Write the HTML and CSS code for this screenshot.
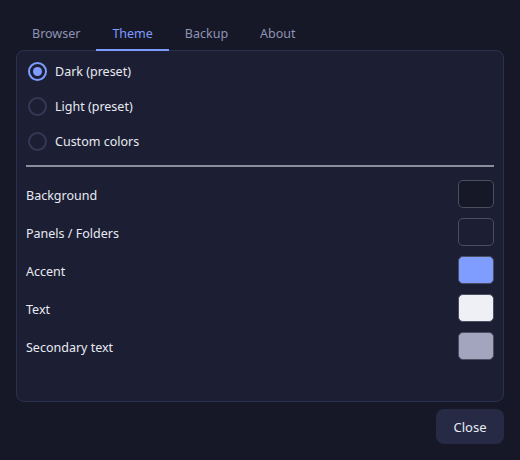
FILE: index.html
```html
<!DOCTYPE html>
<html>
<head>
<meta charset="utf-8">
<link rel="stylesheet" href="styles.css">
</head>
<body>
<div class="app">
  <nav class="tabs">
    <div class="tab">Browser</div>
    <div class="tab active">Theme</div>
    <div class="tab">Backup</div>
    <div class="tab">About</div>
  </nav>
  <section class="panel">
    <div class="radios">
      <label class="radio-row"><span class="radio checked"></span>Dark (preset)</label>
      <label class="radio-row"><span class="radio"></span>Light (preset)</label>
      <label class="radio-row"><span class="radio"></span>Custom colors</label>
    </div>
    <hr class="divider">
    <div class="colors">
      <div class="color-row"><span>Background</span><span class="swatch sw-bg"></span></div>
      <div class="color-row"><span>Panels / Folders</span><span class="swatch sw-panel"></span></div>
      <div class="color-row"><span>Accent</span><span class="swatch sw-accent"></span></div>
      <div class="color-row"><span>Text</span><span class="swatch sw-text"></span></div>
      <div class="color-row"><span>Secondary text</span><span class="swatch sw-sec"></span></div>
    </div>
  </section>
  <footer class="footer">
    <button class="close-btn">Close</button>
  </footer>
</div>
</body>
</html>
```
FILE: styles.css
```css
* { box-sizing: border-box; }
html, body {
  margin: 0;
  height: 100%;
  background: #161827;
}
body {
  font-family: "Noto Sans", "Open Sans", sans-serif;
  font-size: 12.5px;
  color: #e8eaf2;
}
.app {
  height: 460px;
  padding: 16px;
  display: flex;
  flex-direction: column;
}
.tabs {
  display: flex;
  margin-bottom: -1px;
  position: relative;
  z-index: 1;
}
.tab {
  padding: 9px 16px 7px 16px;
  line-height: 17px;
  border-bottom: 2px solid transparent;
  color: #8e94b3;
}
.tab.active {
  color: #7e9cff;
  border-bottom-color: #7e9cff;
}
.panel {
  flex: 1;
  background: #1c1f33;
  border: 1px solid #2d3150;
  border-radius: 8px;
  padding: 3px 9px 9px 9px;
}
.radios {
  display: flex;
  flex-direction: column;
}
.radio-row {
  height: 35px;
  display: flex;
  align-items: center;
  gap: 8px;
  padding-left: 2px;
}
.radio {
  width: 19px;
  height: 19px;
  border-radius: 50%;
  border: 2px solid #343855;
  display: flex;
  align-items: center;
  justify-content: center;
}
.radio.checked {
  border-color: #7e9cff;
}
.radio.checked::after {
  content: "";
  width: 9px;
  height: 9px;
  border-radius: 50%;
  background: #7e9cff;
}
.divider {
  margin: 6px 0 8px 0;
  border: 0;
  height: 2px;
  background: #8b8d9c;
}
.colors {
  display: flex;
  flex-direction: column;
}
.color-row {
  height: 38px;
  display: flex;
  align-items: center;
  justify-content: space-between;
}
.color-row > span:first-child {
  padding-top: 2px;
}
.swatch {
  width: 36px;
  height: 28px;
  border-radius: 5px;
  border: 1px solid #4b4e60;
}
.sw-bg { background: #161827; }
.sw-panel { background: #1c1f33; }
.sw-accent { background: #7f9cff; }
.sw-text { background: #eef0f6; }
.sw-sec { background: #a2a5bd; }
.footer {
  display: flex;
  justify-content: flex-end;
  margin-top: 7px;
}
.close-btn {
  height: 35px;
  width: 68px;
  border: 0;
  border-radius: 8px;
  background: #262a44;
  color: #e8eaf2;
  font-family: inherit;
  font-size: 13px;
}
```
